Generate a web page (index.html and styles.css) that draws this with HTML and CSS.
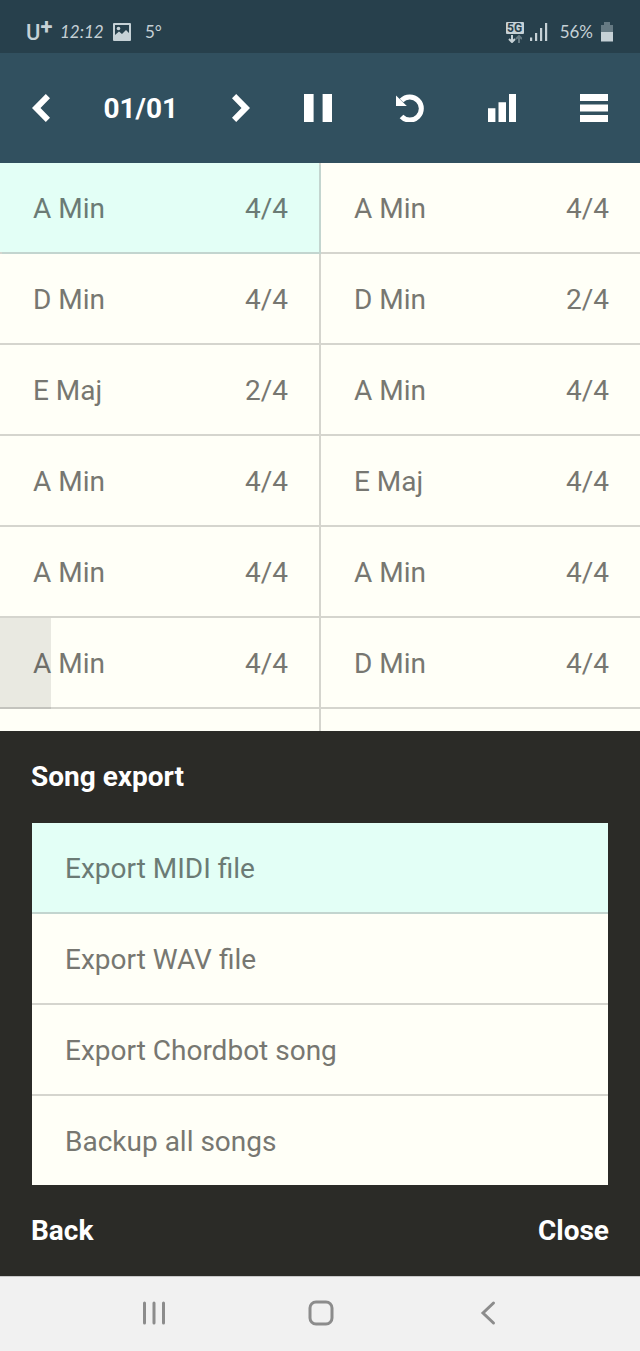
FILE: index.html
```html
<!DOCTYPE html>
<html lang="en">
<head>
  <meta charset="UTF-8">
  <meta name="viewport" content="width=device-width, initial-scale=1.0">
  <title>Song export</title>
  <link rel="stylesheet" href="styles.css">
</head>
<body>
  <div class="status-bar">
    <span class="carrier">U<span class="plus">+</span></span>
    <span class="time">12:12</span>
    <svg class="picture" width="18" height="18" viewBox="0 0 18 18">
      <path fill-rule="evenodd" d="M1 0h16a1 1 0 0 1 1 1v16a1 1 0 0 1-1 1H1a1 1 0 0 1-1-1V1a1 1 0 0 1 1-1zM2 2v10l4-3.500 3 2.500 4-4 3 3V2z" />
      <circle cx="5.500" cy="5.500" r="1.800" />
    </svg>
    <span class="temp">5°</span>
    <span class="network">
      <span class="badge">5G</span>
      <svg width="14" height="8" viewBox="0 0 14 8">
        <path class="down" d="M4 0v6.500M1 4l3 3 3-3" />
        <path class="up" d="M11 8V1.500M8 4l3-3 3 3" />
      </svg>
    </span>
    <svg class="signal" width="18" height="18" viewBox="0 0 18 18">
      <path d="M0 14.500h2.200V18H0zM5 10h2.200v8H5zM10 5h2.200v13H10zM15 0h2.200v18H15z" />
    </svg>
    <span class="percent">56%</span>
    <svg width="12" height="20" viewBox="0 0 12 20">
      <path opacity="0.4" d="M3 0h6v3h3v7H0V3h3z" />
      <path d="M0 10h12v9.500H0z" />
    </svg>
  </div>

  <div class="toolbar">
    <div class="pager">
      <button aria-label="Previous">
        <svg width="18" height="28" viewBox="0 0 18 28"><path d="M0 14L13.800 0 18 4.200 8.500 14 18 23.800 13.800 28z" /></svg>
      </button>
      <span class="page">01/01</span>
      <button aria-label="Next">
        <svg width="18" height="28" viewBox="0 0 18 28"><path d="M18 14L4.200 0 0 4.200 9.500 14 0 23.800 4.200 28z" /></svg>
      </button>
    </div>
    <div class="actions">
      <button aria-label="Pause">
        <svg width="28" height="28" viewBox="0 0 28 28"><path d="M0 0h9.600v28H0zM18.600 0H28v28h-9.400z" /></svg>
      </button>
      <button aria-label="Undo">
        <svg width="28" height="28" viewBox="0 0 28 28">
          <path class="arc" d="M5.500 22.500A11.500 11.500 0 1 0 5.500 6.600" />
          <path d="M0 1.500L10.800 12H0z" />
        </svg>
      </button>
      <button aria-label="Mixer">
        <svg width="28" height="28" viewBox="0 0 28 28"><path d="M0 14.300h7.400V28H0zM10.500 8.300H18V28h-7.500zM21 0h7v28h-7z" /></svg>
      </button>
      <button aria-label="Menu">
        <svg width="28" height="28" viewBox="0 0 28 28"><path d="M0 0h28v7H0zM0 10.500h28v7H0zM0 21h28v7H0z" /></svg>
      </button>
    </div>
  </div>

  <div class="chords">
    <button class="chord selected"><span>A Min</span><span>4/4</span></button>
    <button class="chord"><span>A Min</span><span>4/4</span></button>
    <button class="chord"><span>D Min</span><span>4/4</span></button>
    <button class="chord"><span>D Min</span><span>2/4</span></button>
    <button class="chord"><span>E Maj</span><span>2/4</span></button>
    <button class="chord"><span>A Min</span><span>4/4</span></button>
    <button class="chord"><span>A Min</span><span>4/4</span></button>
    <button class="chord"><span>E Maj</span><span>4/4</span></button>
    <button class="chord"><span>A Min</span><span>4/4</span></button>
    <button class="chord"><span>A Min</span><span>4/4</span></button>
    <button class="chord"><span class="progress" style="width: 16%"></span><span>A Min</span><span>4/4</span></button>
    <button class="chord"><span>D Min</span><span>4/4</span></button>
    <div class="chord"></div>
    <div class="chord"></div>
  </div>

  <div class="panel">
    <h1>Song export</h1>
    <div class="options">
      <button class="selected">Export MIDI file</button>
      <button>Export WAV file</button>
      <button>Export Chordbot song</button>
      <button>Backup all songs</button>
    </div>
    <div class="panel-footer">
      <button>Back</button>
      <button>Close</button>
    </div>
  </div>

  <div class="nav-bar">
    <button aria-label="Recent apps">
      <svg width="28" height="28" viewBox="0 0 28 28"><path d="M4.500 4v20M14 4v20M23.500 4v20" /></svg>
    </button>
    <button aria-label="Home">
      <svg width="28" height="28" viewBox="0 0 28 28"><rect x="3" y="3" width="22" height="22" rx="6" /></svg>
    </button>
    <button aria-label="Back">
      <svg width="28" height="28" viewBox="0 0 28 28"><path d="M19.500 4L9 14l10.500 10" /></svg>
    </button>
  </div>
</body>
</html>
```

FILE: styles.css
```css
* {
  box-sizing: border-box;
}
body {
  display: flex;
  flex-direction: column;
  height: 100vh;
  margin: 0;
  font-family: Roboto, sans-serif;
  font-size: 28px;
  line-height: 32px;
  background-color: #fffff7;
}
button {
  padding: 0;
  border: none;
  background: none;
  color: inherit;
  font: inherit;
  cursor: pointer;
}
svg {
  display: block;
  fill: currentColor;
}

/* status bar */
.status-bar {
  display: flex;
  flex-shrink: 0;
  align-items: center;
  height: 53px;
  padding: 11px 27px 0 26px;
  background-color: #27404c;
  color: #c6d1d6;
  font-family: Lato, sans-serif;
  font-size: 17px;
  line-height: 20px;
}
.carrier {
  display: flex;
  width: 34px;
  padding-top: 2px;
  font-family: Roboto, sans-serif;
  font-size: 22px;
  font-weight: 500;
}
.plus {
  margin-top: -6px;
  font-weight: bold;
}
.time {
  width: 53px;
  font-style: italic;
}
.temp {
  margin-left: 14px;
}
.network {
  display: flex;
  flex-direction: column;
  align-items: center;
  gap: 1px;
  margin-left: auto;
}
.badge {
  width: 18px;
  border-radius: 1px;
  background-color: #c6d1d6;
  color: #27404c;
  font-family: Roboto, sans-serif;
  font-size: 12px;
  font-weight: bold;
  line-height: 12px;
  text-align: center;
}
.network path {
  fill: none;
  stroke: currentColor;
  stroke-width: 2;
}
.network .up {
  opacity: 0.4;
}
.signal {
  margin-left: 6px;
}
.percent {
  margin: 0 8px 0 12px;
}

/* toolbar */
.toolbar {
  display: grid;
  grid-template-columns: 5fr 7fr;
  gap: 54px;
  flex-shrink: 0;
  height: 110px;
  padding: 0 32px;
  background-color: #31505f;
  color: #fff;
  font-weight: bold;
}
.pager,
.actions {
  display: flex;
  align-items: center;
  justify-content: space-between;
}
.page {
  padding-top: 2px;
}
.arc {
  fill: none;
  stroke: currentColor;
  stroke-width: 5;
}

/* chord grid, the gaps are the lines */
.chords {
  display: grid;
  grid-template-columns: 1fr 1fr;
  grid-auto-rows: 89px;
  gap: 2px;
  flex: 1 1 0;
  min-height: 0;
  overflow: hidden;
  background-color: #d5d5ce;
}
.chord {
  position: relative;
  display: flex;
  align-items: center;
  justify-content: space-between;
  padding: 3px 31px 0 33px;
  background-color: #fffff7;
  color: #777771;
}
.chord.selected {
  background-color: #e3fff6;
  box-shadow: 2px 2px #c3d5cf;
  color: #6b7b75;
}
.progress {
  position: absolute;
  top: 0;
  bottom: -2px;
  left: 0;
  background-color: rgba(43, 43, 39, 0.1);
}

/* export panel */
.panel {
  flex-shrink: 0;
  padding: 0 32px;
  background-color: #2b2b27;
  color: #fff;
}
.panel h1 {
  margin: 0 -1px;
  font-size: 28px;
  line-height: 92px;
}
.options {
  display: grid;
  grid-auto-rows: 89px;
  gap: 2px;
  background-color: #d5d5ce;
}
.options button {
  padding: 2px 33px 0;
  background-color: #fffff7;
  color: #777771;
  text-align: left;
}
.options .selected {
  background-color: #e3fff6;
  box-shadow: 0 2px #c3d5cf;
  color: #6b7b75;
}
.panel-footer {
  display: flex;
  align-items: center;
  justify-content: space-between;
  height: 91px;
  margin: 0 -1px;
  font-weight: bold;
}

/* system navigation */
.nav-bar {
  display: flex;
  flex-shrink: 0;
  align-items: center;
  justify-content: space-between;
  height: 75px;
  padding: 0 138px 3px 140px;
  border-top: 1px solid #c8c8c8;
  background-color: #f1f1f1;
  color: #8c8c8c;
}
.nav-bar svg {
  fill: none;
  stroke: currentColor;
  stroke-width: 3;
  stroke-linecap: round;
}
```
